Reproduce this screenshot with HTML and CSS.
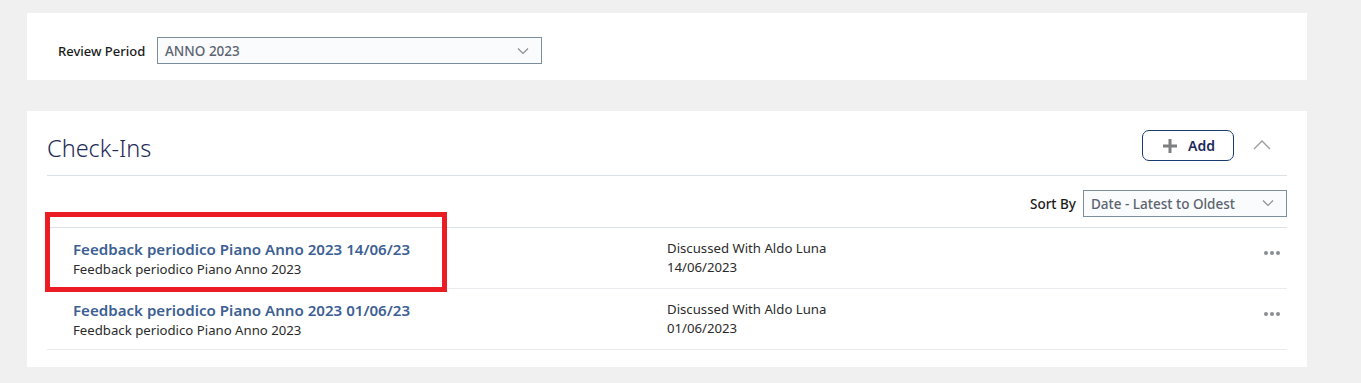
FILE: index.html
```html
<!DOCTYPE html>
<html>
<head>
<meta charset="utf-8">
<link rel="stylesheet" href="styles.css">
</head>
<body>
<div class="page">
  <section class="card filter-card">
    <label class="field-label">Review Period</label>
    <div class="select period-select">
      <span class="select-value">ANNO 2023</span>
      <svg class="caret" width="12" height="8" viewBox="0 0 12 8"><path d="M1 1.5 L6 6.5 L11 1.5" fill="none" stroke="#8a8f96" stroke-width="1.2"/></svg>
    </div>
  </section>

  <section class="card checkins-card">
    <header class="card-header">
      <h2 class="card-title">Check-Ins</h2>
      <div class="header-actions">
        <button class="add-btn">
          <svg width="14" height="14" viewBox="0 0 14 14"><path d="M7 0 V14 M0 7 H14" stroke="#7d7f82" stroke-width="3"/></svg>
          <span>Add</span>
        </button>
        <svg class="collapse" width="18" height="11" viewBox="0 0 18 11"><path d="M1 10 L9 2 L17 10" fill="none" stroke="#9a9da1" stroke-width="1.4"/></svg>
      </div>
    </header>
    <div class="sort-row">
      <span class="sort-label">Sort By</span>
      <div class="select sort-select">
        <span class="select-value">Date - Latest to Oldest</span>
        <svg class="caret" width="12" height="8" viewBox="0 0 12 8"><path d="M1 1.5 L6 6.5 L11 1.5" fill="none" stroke="#8a8f96" stroke-width="1.2"/></svg>
      </div>
    </div>
    <ul class="list">
      <li class="item">
        <div class="item-main">
          <a class="item-title">Feedback periodico Piano Anno 2023 14/06/23</a>
          <div class="item-sub">Feedback periodico Piano Anno 2023</div>
        </div>
        <div class="item-meta">
          <div>Discussed With Aldo Luna</div>
          <div>14/06/2023</div>
        </div>
        <div class="more"><i></i><i></i><i></i></div>
      </li>
      <li class="item">
        <div class="item-main">
          <a class="item-title">Feedback periodico Piano Anno 2023 01/06/23</a>
          <div class="item-sub">Feedback periodico Piano Anno 2023</div>
        </div>
        <div class="item-meta">
          <div>Discussed With Aldo Luna</div>
          <div>01/06/2023</div>
        </div>
        <div class="more"><i></i><i></i><i></i></div>
      </li>
    </ul>
  </section>
  <div class="highlight"></div>
</div>
</body>
</html>
```

FILE: styles.css
```css
* { box-sizing: border-box; }
html, body { margin: 0; padding: 0; }
body {
  background: #f0f0f0;
  font-family: "Noto Sans", "Open Sans", sans-serif;
  color: #2b2b2b;
}
.page {
  position: relative;
  padding: 13px 54px 0 27px;
}
.card {
  background: #ffffff;
  width: 1280px;
}
.filter-card {
  height: 67px;
  padding: 24px 0 0 31px;
  display: flex;
  align-items: flex-start;
}
.field-label {
  font-size: 13px;
  font-weight: 500;
  color: #1a1a1a;
  line-height: 28px;
  width: 99px;
}
.select {
  height: 27px;
  border: 1px solid #7c8d9b;
  background: #fafbfd;
  display: flex;
  align-items: center;
  justify-content: space-between;
  padding: 0 12px 0 7px;
}
.select-value {
  font-size: 13.5px;
  font-weight: 500;
  color: #5b6470;
  padding-top: 1px;
}
.period-select { width: 385px; }
.checkins-card {
  margin-top: 31px;
  height: 256px;
  padding: 19px 20px 0 20px;
}
.card-header {
  display: flex;
  justify-content: space-between;
  align-items: flex-start;
  height: 46px;
  border-bottom: 1px solid #dce1e7;
}
.card-title {
  margin: 0;
  font-size: 23.5px;
  font-weight: 300;
  color: #1f2c57;
  line-height: 34px;
  padding-top: 1px;
}
.header-actions {
  display: flex;
  align-items: center;
  gap: 19px;
}
.add-btn {
  width: 92px;
  height: 31px;
  border: 1px solid #1b3a70;
  border-radius: 7px;
  background: #fff;
  display: flex;
  align-items: center;
  justify-content: center;
  gap: 11px;
  padding: 0 0 0 2px;
  font-family: inherit;
  font-size: 14px;
  font-weight: 600;
  color: #1b2a5a;
}
.collapse { margin-right: 16px; margin-top: -3px; }
.sort-row {
  display: flex;
  justify-content: flex-end;
  align-items: center;
  gap: 7px;
  height: 52px;
  padding-bottom: 10px;
  padding-top: 13px;
  border-bottom: 1px solid #dce1e7;
}
.sort-label {
  font-size: 13.5px;
  font-weight: 500;
  color: #1a1a1a;
  padding-top: 1px;
}
.sort-select { width: 204px; }
.list {
  list-style: none;
  margin: 0;
  padding: 0;
}
.item {
  display: flex;
  align-items: flex-start;
  height: 61px;
  border-bottom: 1px solid #e9ebee;
  padding: 11px 7px 0 26px;
}
.item-main { width: 594px; }
.item-title {
  display: block;
  font-size: 15.1px;
  font-weight: 600;
  color: #3d5f93;
  line-height: 21px;
}
.item-sub {
  font-size: 13.2px;
  color: #2b2b2b;
  line-height: 19px;
}
.item-meta {
  flex: 1;
  font-size: 13.2px;
  color: #2b2b2b;
  line-height: 19px;
}
.more {
  display: flex;
  gap: 2px;
  margin-top: 12px;
}
.more i {
  width: 4px;
  height: 4px;
  border-radius: 50%;
  background: #8a8d91;
}
.highlight {
  position: absolute;
  left: 45px;
  top: 212px;
  width: 402px;
  height: 80px;
  border: 5px solid #ec1c24;
}
```
